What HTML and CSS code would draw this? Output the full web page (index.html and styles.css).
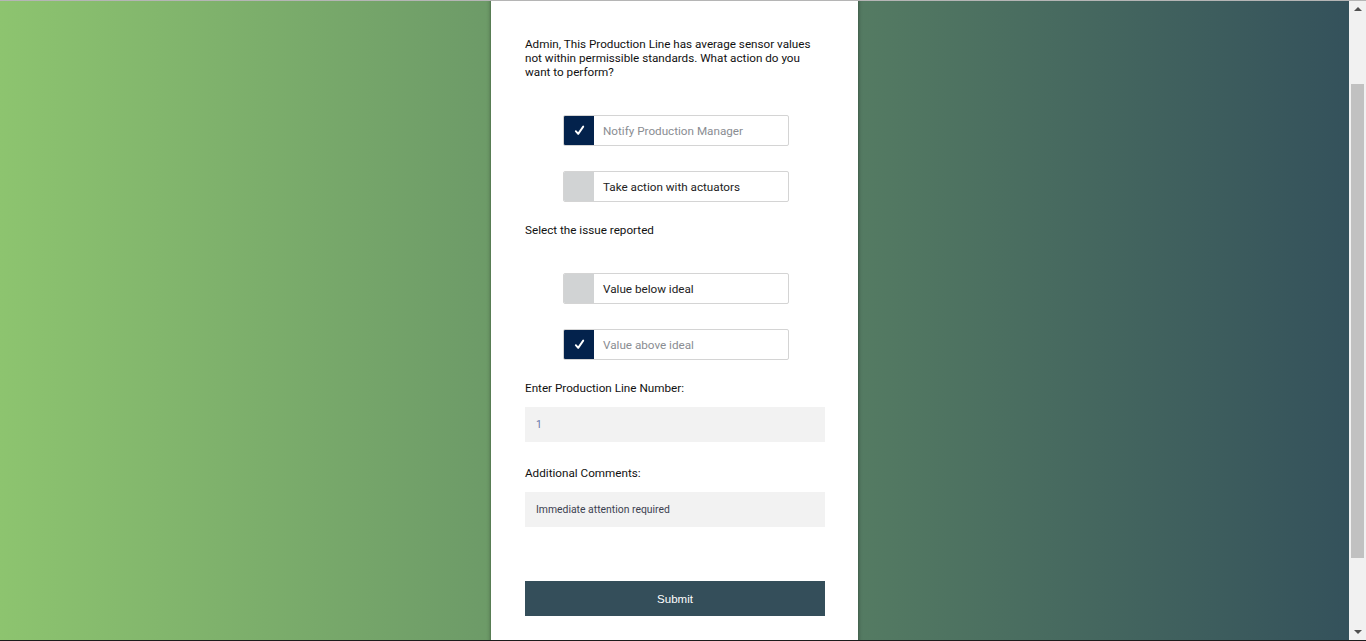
FILE: index.html
```html
<!DOCTYPE html>
<html lang="en">
<head>
<meta charset="utf-8">
<title>Production Line Action</title>
<link rel="stylesheet" href="styles.css">
</head>
<body>
<div class="topline"></div>
<main class="card">
  <p class="intro">Admin, This Production Line has average sensor values not within permissible standards. What action do you want to perform?</p>

  <div class="option first checked">
    <span class="box"><svg width="11" height="11" viewBox="0 0 11 11"><path d="M1.8 6.2 L4.2 8.9 L9.2 1.6" fill="none" stroke="#fff" stroke-width="1.9" stroke-linecap="round" stroke-linejoin="round"/></svg></span>
    <span class="opt-text">Notify Production Manager</span>
  </div>
  <div class="option second">
    <span class="box"></span>
    <span class="opt-text">Take action with actuators</span>
  </div>

  <div class="label sel">Select the issue reported</div>

  <div class="option first">
    <span class="box"></span>
    <span class="opt-text">Value below ideal</span>
  </div>
  <div class="option second checked">
    <span class="box"><svg width="11" height="11" viewBox="0 0 11 11"><path d="M1.8 6.2 L4.2 8.9 L9.2 1.6" fill="none" stroke="#fff" stroke-width="1.9" stroke-linecap="round" stroke-linejoin="round"/></svg></span>
    <span class="opt-text">Value above ideal</span>
  </div>

  <div class="label sel">Enter Production Line Number:</div>
  <div class="field num">1</div>

  <div class="label cm">Additional Comments:</div>
  <div class="field comment">Immediate attention required</div>

  <button class="submit" type="button">Submit</button>
</main>
<aside class="scrollbar" aria-hidden="true">
  <span class="arrow up"></span>
  <span class="track"><span class="thumb"></span></span>
  <span class="arrow down"></span>
</aside>
<div class="bottomline"></div>
<script src="script.js"></script>
</body>
</html>
```

FILE: styles.css
```css
html::-webkit-scrollbar {
  display: none;
}
body {
  margin: 0;
  padding-right: 17px;
  min-height: 823px;
  background: linear-gradient(to right, #8dc46f 0%, #33505b 100%);
  font-family: Roboto, "Liberation Sans", Arial, sans-serif;
  font-size: 11.7px;
  color: #111;
  display: flex;
  justify-content: center;
}
.topline {
  position: fixed;
  left: 0;
  right: 0;
  top: 0;
  height: 1px;
  background: #b5b5b5;
  z-index: 5;
}
.bottomline {
  position: fixed;
  left: 0;
  right: 0;
  bottom: 0;
  height: 1px;
  background: #1c1c1c;
  z-index: 5;
}
.card {
  width: 300px;
  background: #fff;
  padding: 128px 33px 116px 34px;
  box-shadow: 0 0 4px rgba(0, 0, 0, 0.45);
  display: flex;
  flex-direction: column;
  min-height: 579px;
}
.intro {
  margin: 0;
  line-height: 14px;
  color: #111;
  padding-right: 4px;
}
.option {
  margin-left: 38px;
  width: 226px;
  height: 31px;
  box-sizing: border-box;
  border: 1px solid #d4d4d4;
  border-radius: 2px;
  display: flex;
  align-items: stretch;
  overflow: hidden;
}
.option.first {
  margin-top: 36px;
}
.option.second {
  margin-top: 25px;
}
.box {
  width: 30px;
  flex: none;
  background: #d1d3d4;
  display: flex;
  align-items: center;
  justify-content: center;
}
.checked .box {
  background: #03224c;
}
.opt-text {
  display: flex;
  align-items: center;
  padding-left: 9px;
  color: #222;
}
.checked .opt-text {
  color: #8a8d92;
}
.label {
  line-height: 14px;
  color: #111;
}
.label.sel {
  margin-top: 21px;
}
.label.cm {
  margin-top: 24px;
}
.field {
  margin-top: 12px;
  height: 35px;
  background: #f2f2f2;
  display: flex;
  align-items: center;
  padding-left: 11px;
  font-size: 10.4px;
}
.num {
  color: #6a78a8;
}
.comment {
  color: #3c4150;
}
.submit {
  margin-top: 54px;
  height: 35px;
  width: 300px;
  border: 0;
  border-radius: 0;
  background: #344e5a;
  color: #fff;
  font-family: "Liberation Sans", Arial, sans-serif;
  font-size: 11.5px;
  padding: 0;
}
.scrollbar {
  position: fixed;
  top: 1px;
  right: 0;
  bottom: 1px;
  width: 17px;
  background: #f1f1f1;
  display: flex;
  flex-direction: column;
  z-index: 4;
}
.arrow {
  height: 16px;
  flex: none;
  display: flex;
  align-items: center;
  justify-content: center;
}
.arrow::before {
  content: "";
  width: 0;
  height: 0;
  border-left: 4px solid transparent;
  border-right: 4px solid transparent;
}
.arrow.up::before {
  border-bottom: 4px solid #505050;
}
.arrow.down::before {
  border-top: 4px solid #505050;
}
.track {
  flex: 1;
  display: flex;
  flex-direction: column;
  padding: 67px 2px 66px;
}
.thumb {
  flex: 1;
  background: #c1c1c1;
}
```

FILE: script.js
```js
window.scrollTo(0, 91);
window.addEventListener('load', function () { window.scrollTo(0, 91); });
```
